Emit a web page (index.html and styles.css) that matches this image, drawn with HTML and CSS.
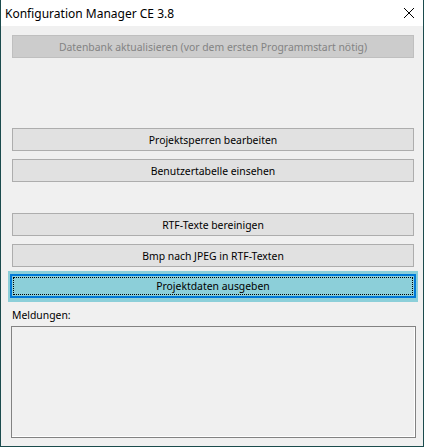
FILE: index.html
```html
<!DOCTYPE html>
<html lang="de">
<head>
    <meta charset="UTF-8">
    <title>Konfiguration Manager CE 3.8</title>
    <link rel="stylesheet" href="styles.css">
</head>
<body>
    <div class="window">
        <div class="titlebar">
            <span class="title">Konfiguration Manager CE 3.8</span>
            <svg class="close" width="12" height="12" viewBox="0 0 12 12">
                <path d="M1 1 L11 11 M11 1 L1 11" stroke="#000" stroke-width="1" fill="none"/>
            </svg>
        </div>
        <div class="client">
            <button class="btn first" disabled>Datenbank aktualisieren (vor dem ersten Programmstart nötig)</button>

            <button class="btn group">Projektsperren bearbeiten</button>
            <button class="btn">Benutzertabelle einsehen</button>

            <button class="btn group">RTF-Texte bereinigen</button>
            <button class="btn">Bmp nach JPEG in RTF-Texten</button>
            <div class="focus-halo">
                <button class="btn active"><span class="focus-rect">Projektdaten ausgeben</span></button>
            </div>

            <div class="label">Meldungen:</div>
            <div class="messages"></div>
        </div>
    </div>
</body>
</html>
```

FILE: styles.css
```css
body {
    margin: 0;
    background-color: #f0f0f0;
    font-family: 'Noto Sans', sans-serif;
    font-size: 10.4px;
}
.window {
    width: 424px;
    height: 447px;
    box-sizing: border-box;
    background-color: #f0f0f0;
    border: 1px solid #1b4b4d;
    border-top: none;
    display: flex;
    flex-direction: column;
    overflow: hidden;
}
.titlebar {
    flex-shrink: 0;
    height: 26px;
    background-color: white;
    margin: 0 -1px;
    display: flex;
    align-items: center;
    justify-content: space-between;
    padding: 0 9px 0 5px;
}
.title {
    color: #000;
    font-size: 12px;
}
.close {
    display: block;
}
.client {
    display: flex;
    flex-direction: column;
    padding: 9px 9px 0 11px;
}
.btn {
    flex-shrink: 0;
    display: block;
    width: 402px;
    height: 23px;
    margin: 0 0 8px 0;
    padding: 0;
    background-color: #e1e1e1;
    border: 1px solid #adadad;
    font-family: 'Noto Sans', sans-serif;
    font-size: 10.4px;
    color: #000;
    text-align: center;
}
.btn:disabled {
    background-color: #cccccc;
    border-color: #bfbfbf;
    color: #838383;
}
.btn.group {
    margin-top: 62px;
}
.btn.group + .btn + .btn.group {
    margin-top: 23px;
}
.focus-halo {
    flex-shrink: 0;
    margin: -4px 0 0 -4px;
    width: 410px;
    padding: 3px 2px 4px 2px;
    box-sizing: border-box;
    background-color: #8ccfd9;
}
.btn.active {
    width: 406px;
    height: 24px;
    margin: 0;
    border: 2px solid #0078d7;
    background-color: #8ccfd9;
    padding: 1px;
}
.focus-rect {
    display: flex;
    align-items: center;
    justify-content: center;
    height: 100%;
    box-sizing: border-box;
    border: 1px dotted #000;
}
.label {
    flex-shrink: 0;
    margin-top: 6px;
    height: 18px;
    color: #000;
}
.messages {
    flex-shrink: 0;
    margin-left: -1px;
    width: 405px;
    height: 112px;
    box-sizing: border-box;
    border: 1px solid #828282;
    box-shadow: inset -1px -1px 0 #fff;
    background-color: #f0f0f0;
}
```
